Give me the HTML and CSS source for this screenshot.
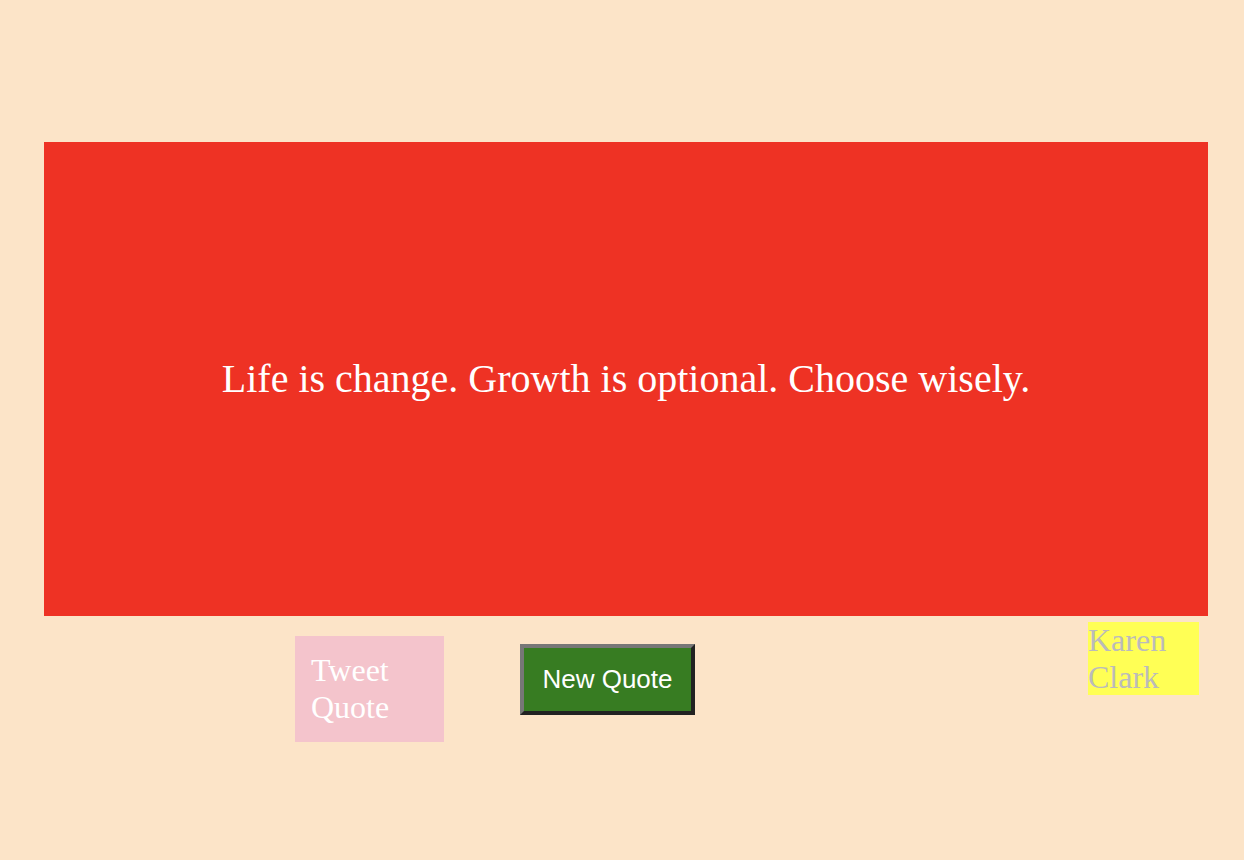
FILE: index.html
```html
<!DOCTYPE html>
<html>
<head>
<meta charset="utf-8">
<link rel="stylesheet" href="styles.css">
</head>
<body>
<div class="page">
  <div class="quote-box">
    <p class="quote-text">Life is change. Growth is optional. Choose wisely.</p>
  </div>
  <div class="controls">
    <a class="tweet">Tweet Quote</a>
    <button class="new-quote">New Quote</button>
    <div class="author">Karen Clark</div>
  </div>
</div>
</body>
</html>
```
FILE: styles.css
```css
html, body {
  margin: 0;
  padding: 0;
  background: #fce4c8;
  height: 100%;
}
.page {
  padding: 142px 36px 0 44px;
  font-family: "Liberation Serif", "Times New Roman", serif;
}
.quote-box {
  background: #ee3224;
  height: 474px;
  display: flex;
  align-items: center;
  justify-content: center;
}
.quote-text {
  margin: 0;
  color: #fff;
  font-size: 40px;
  line-height: 1.15;
}
.controls {
  display: flex;
  align-items: flex-start;
}
.tweet {
  display: block;
  margin: 20px 0 0 251px;
  width: 117px;
  padding: 16px;
  background: #f4c4cc;
  color: #fff;
  font-size: 32px;
  line-height: 37px;
}
.new-quote {
  margin: 28px 0 0 76px;
  width: 175px;
  height: 71px;
  padding: 0;
  background: #377c22;
  color: #fff;
  font-family: "Liberation Sans", Arial, sans-serif;
  font-size: 26px;
  border: 4px solid;
  border-color: #777 #222 #222 #777;
}
.author {
  margin: 6px 0 0 393px;
  width: 111px;
  background: #ffff55;
  color: #bbb;
  font-size: 32px;
  line-height: 36.5px;
}
```
